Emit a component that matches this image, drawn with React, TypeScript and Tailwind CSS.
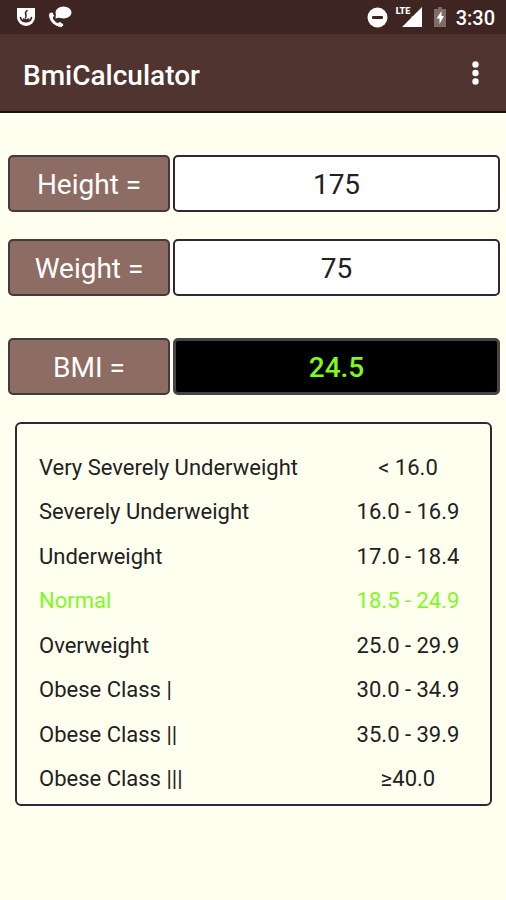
import React, { useState } from "react";

interface BmiClass {
  label: string;
  range: string;
  min: number;
  max: number;
}

const bmiClasses: BmiClass[] = [
  { label: "Very Severely Underweight", range: "< 16.0", min: 0, max: 16 },
  { label: "Severely Underweight", range: "16.0 - 16.9", min: 16, max: 17 },
  { label: "Underweight", range: "17.0 - 18.4", min: 17, max: 18.5 },
  { label: "Normal", range: "18.5 - 24.9", min: 18.5, max: 25 },
  { label: "Overweight", range: "25.0 - 29.9", min: 25, max: 30 },
  { label: "Obese Class |", range: "30.0 - 34.9", min: 30, max: 35 },
  { label: "Obese Class ||", range: "35.0 - 39.9", min: 35, max: 40 },
  { label: "Obese Class |||", range: "≥40.0", min: 40, max: Infinity },
];

const StatusBar = () => (
  <div className="flex h-[34px] items-center justify-between bg-[#3e2522] pl-4 pr-[11px] text-white">
    <div className="flex items-center gap-3">
      <svg width="20" height="20" viewBox="0 0 20 20" aria-hidden="true">
        <path d="M1 1h18v9a9 9 0 0 1-18 0z" fill="white" />
        <path
          d="M11 3.500c-4 3.500 1 4-1.500 7.500M4.500 10.500c1 5.500 10 5.500 11 0M7.500 12c1 1.500 4 1.500 5 0"
          fill="none"
          stroke="#3e2522"
          strokeWidth="1.600"
          strokeLinecap="round"
        />
      </svg>
      <svg width="24" height="22" viewBox="0 0 24 22" aria-hidden="true">
        <ellipse cx="15.500" cy="6.500" rx="8" ry="6" fill="white" />
        <path d="M8 7l-.5 5.500 6-1.500z" fill="white" />
        <path
          d="M1 7.500C-1 13 6 21.500 13.500 21.500l2-2c.3-.8 0-1.500-.5-2l-3-2-2.500 1.200c-2-1.200-3.500-2.700-4.200-4.700L6.500 9.500 5 6.500C4 5.500 2 6 1 7.500z"
          fill="white"
          stroke="#3e2522"
          strokeWidth="1"
        />
      </svg>
    </div>
    <div className="flex items-center">
      <svg width="21" height="21" viewBox="0 0 21 21" aria-hidden="true">
        <circle cx="10.500" cy="10.500" r="10" fill="white" />
        <rect x="5" y="9" width="11" height="3" rx="1" fill="#3e2522" />
      </svg>
      <div className="relative ml-2 h-5 w-[26px]">
        <svg className="h-full w-full" viewBox="0 0 26 20" aria-hidden="true">
          <path d="M26 0v20H6l9.500-9.500V9.500h1z" fill="white" />
        </svg>
        <span className="absolute left-0 top-0 font-[Roboto,sans-serif] text-[9px] font-black leading-[9px]">
          LTE
        </span>
      </div>
      <svg
        className="ml-3"
        width="12"
        height="20"
        viewBox="0 0 12 20"
        aria-hidden="true"
      >
        <path d="M4 0h4v2h4v18H0V2h4z" fill="#7d6c69" />
        <path d="M7.500 4L2.500 11.500H5.500v5.500L10 9H7.500z" fill="white" />
      </svg>
      <span className="ml-[10px] pt-0.5 text-[20px] font-medium leading-6">
        3:30
      </span>
    </div>
  </div>
);

interface FieldRowProps {
  id: string;
  label: string;
  children: React.ReactNode;
}

const FieldRow = ({ id, label, children }: FieldRowProps) => (
  <div className="grid h-[57px] grid-cols-3 gap-[3px] text-[28px]">
    <label
      htmlFor={id}
      className="flex items-center justify-center rounded-[5px] border-2 border-[#46393c] bg-[#8d6c63] pt-[3px] text-white"
    >
      {label}
    </label>
    <div className="col-span-2 flex">{children}</div>
  </div>
);

export default function App() {
  const [height, setHeight] = useState("175");
  const [weight, setWeight] = useState("75");

  const meters = Number(height) / 100;
  const bmi =
    meters > 0 ? Math.round((Number(weight) / meters ** 2) * 10) / 10 : 0;

  return (
    <div className="min-h-screen bg-[#fffff0] font-[Roboto,sans-serif] text-[#212121]">
      <StatusBar />
      <header className="flex h-[79px] items-center justify-between border-b-2 border-[#1c1010] bg-[#4f342f] pl-[23px] pr-[19px] text-white">
        <h1 className="pt-1.5 text-[28px] font-medium">BmiCalculator</h1>
        <button type="button" aria-label="More options" className="px-2">
          <svg width="7" height="24" viewBox="0 0 7 24" aria-hidden="true">
            <circle cx="3.500" cy="3.500" r="3.200" fill="white" />
            <circle cx="3.500" cy="12" r="3.200" fill="white" />
            <circle cx="3.500" cy="20.500" r="3.200" fill="white" />
          </svg>
        </button>
      </header>

      <main>
        <div className="pl-2 pr-[6px] pt-[42px]">
          <FieldRow id="height" label="Height =">
            <input
              id="height"
              inputMode="numeric"
              className="w-full rounded-[5px] border-2 border-[#2c2838] bg-white pt-[3px] text-center outline-none"
              value={height}
              onChange={(e) => setHeight(e.target.value)}
            />
          </FieldRow>
          <div className="pt-[27px]">
            <FieldRow id="weight" label="Weight =">
              <input
                id="weight"
                inputMode="numeric"
                className="w-full rounded-[5px] border-2 border-[#2c2838] bg-white pt-[3px] text-center outline-none"
                value={weight}
                onChange={(e) => setWeight(e.target.value)}
              />
            </FieldRow>
          </div>
          <div className="pt-[42px]">
            <FieldRow id="bmi" label="BMI =">
              <output
                id="bmi"
                className="flex w-full items-center justify-center rounded-[5px] border-[3px] border-[#454345] bg-black pt-[3px] font-medium text-[#7dfa1e]"
              >
                {bmi.toFixed(1)}
              </output>
            </FieldRow>
          </div>
        </div>

        <section className="ml-[15px] mr-[14px] mt-[27px] rounded-[6px] border-2 border-[#2c2838] pb-[3px] pl-[22px] pr-[18px] pt-[21px]">
          <table className="h-[356px] w-full text-[22px]">
            <tbody>
              {bmiClasses.map((item) => (
                <tr
                  key={item.label}
                  className={
                    bmi >= item.min && bmi < item.max ? "text-[#7dfa1e]" : ""
                  }
                >
                  <th scope="row" className="p-0 text-left font-normal">
                    {item.label}
                  </th>
                  <td className="w-[128px] p-0 text-center">{item.range}</td>
                </tr>
              ))}
            </tbody>
          </table>
        </section>
      </main>
    </div>
  );
}
